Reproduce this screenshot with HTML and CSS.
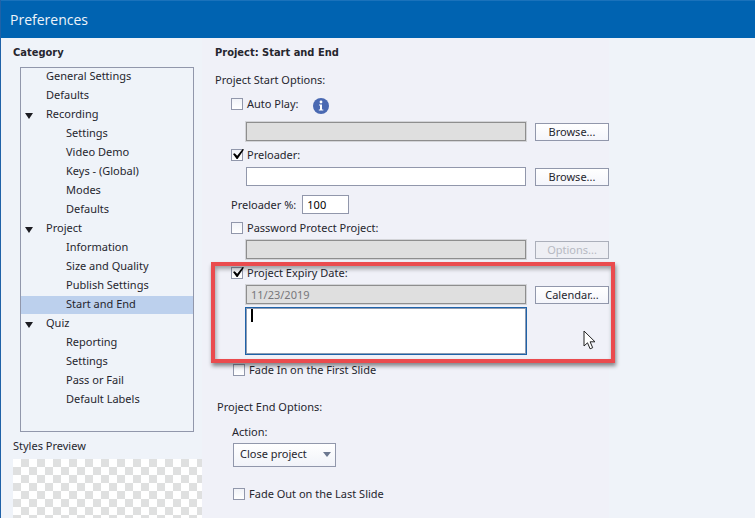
FILE: index.html
```html
<!DOCTYPE html>
<html lang="en">
<head>
    <meta charset="UTF-8">
    <title>Preferences</title>
    <link rel="stylesheet" href="styles.css">
</head>
<body>
    <header class="titlebar">Preferences</header>

    <div class="content">
        <aside class="sidebar">
            <h2 class="heading">Category</h2>
            <ul class="tree">
                <li><a href="#">General Settings</a></li>
                <li><a href="#">Defaults</a></li>
                <li>
                    <button class="toggle" aria-label="Collapse Recording"></button>
                    <a href="#">Recording</a>
                    <ul>
                        <li><a href="#">Settings</a></li>
                        <li><a href="#">Video Demo</a></li>
                        <li><a href="#">Keys - (Global)</a></li>
                        <li><a href="#">Modes</a></li>
                        <li><a href="#">Defaults</a></li>
                    </ul>
                </li>
                <li>
                    <button class="toggle" aria-label="Collapse Project"></button>
                    <a href="#">Project</a>
                    <ul>
                        <li><a href="#">Information</a></li>
                        <li><a href="#">Size and Quality</a></li>
                        <li><a href="#">Publish Settings</a></li>
                        <li><a href="#" class="selected">Start and End</a></li>
                    </ul>
                </li>
                <li>
                    <button class="toggle" aria-label="Collapse Quiz"></button>
                    <a href="#">Quiz</a>
                    <ul>
                        <li><a href="#">Reporting</a></li>
                        <li><a href="#">Settings</a></li>
                        <li><a href="#">Pass or Fail</a></li>
                        <li><a href="#">Default Labels</a></li>
                    </ul>
                </li>
            </ul>
            <div class="preview-label">Styles Preview</div>
            <div class="preview"></div>
        </aside>

        <main class="panel">
            <h2 class="heading">Project: Start and End</h2>
            <div class="section-label">Project Start Options:</div>

            <div class="option option-autoplay">
                <div class="check-row">
                    <input type="checkbox" id="autoPlay">
                    <label for="autoPlay">Auto Play:</label>
                    <svg class="info" viewBox="0 0 16 16">
                        <circle cx="8" cy="8" r="8" fill="#4a69b2"/>
                        <circle cx="8" cy="4" r="1.4" fill="#fff"/>
                        <path d="M6 6.5h3v5h1.3v1H5.8v-1H7v-4H6z" fill="#fff"/>
                    </svg>
                </div>
                <div class="field-row">
                    <input type="text" aria-label="Auto play image" disabled>
                    <button>Browse...</button>
                </div>
            </div>

            <div class="option">
                <div class="check-row">
                    <input type="checkbox" id="preloader" checked>
                    <label for="preloader">Preloader:</label>
                </div>
                <div class="field-row">
                    <input type="text" aria-label="Preloader file">
                    <button>Browse...</button>
                </div>
                <div class="percent-row">
                    <label for="percent">Preloader %:</label>
                    <input type="text" id="percent" value="100">
                </div>
            </div>

            <div class="option">
                <div class="check-row">
                    <input type="checkbox" id="password">
                    <label for="password">Password Protect Project:</label>
                </div>
                <div class="field-row">
                    <input type="text" aria-label="Password" disabled>
                    <button disabled>Options...</button>
                </div>
            </div>

            <div class="option expiry">
                <div class="check-row">
                    <input type="checkbox" id="expiry" checked>
                    <label for="expiry">Project Expiry Date:</label>
                </div>
                <div class="field-row">
                    <input type="text" aria-label="Expiry date" value="11/23/2019" disabled>
                    <button>Calendar...</button>
                </div>
                <div class="field-row message-row">
                    <textarea aria-label="Expiry message"></textarea>
                    <span class="caret"></span>
                </div>
                <div class="highlight"></div>
                <svg class="pointer" viewBox="0 0 13 20">
                    <path d="M1 1v15l3.5-3.2 2.6 6 2.6-1.1-2.6-5.9H12z" fill="#fff" stroke="#222" stroke-linejoin="round"/>
                </svg>
            </div>

            <div class="check-row shifted">
                <input type="checkbox" id="fadeIn">
                <label for="fadeIn">Fade In on the First Slide</label>
            </div>

            <div class="end-options">
                <div class="end-label">Project End Options:</div>
                <label class="action-label" for="action">Action:</label>
                <div class="select">
                    <select id="action">
                        <option>Close project</option>
                    </select>
                </div>
                <div class="check-row shifted">
                    <input type="checkbox" id="fadeOut">
                    <label for="fadeOut">Fade Out on the Last Slide</label>
                </div>
            </div>
        </main>
    </div>
</body>
</html>
```

FILE: styles.css
```css
* {
    box-sizing: border-box;
}

body {
    margin: 0;
    min-height: 100vh;
    display: flex;
    flex-direction: column;
    background: #eff3f9;
    border-left: 1px solid #1f62a8;
    color: #26262e;
    font-family: "Noto Sans", sans-serif;
    font-size: 11px;
    line-height: 18px;
}

input, button, select, textarea {
    font: inherit;
    color: inherit;
    margin: 0;
}

ul {
    list-style: none;
    margin: 0;
    padding: 0;
}

.titlebar {
    height: 38px;
    padding-left: 9px;
    background: #0063b1;
    border-top: 1px solid #1a72bb;
    color: #eef4fa;
    font-family: "Open Sans", sans-serif;
    font-size: 14px;
    line-height: 37px;
}

.content {
    flex: 1;
    display: flex;
}

.heading {
    margin: 0;
    height: 29px;
    font-family: "DejaVu Sans Condensed", "DejaVu Sans", sans-serif;
    font-size: 11px;
    font-weight: bold;
    line-height: 30px;
}

/* Category tree */
.sidebar {
    flex: none;
    width: 201px;
    padding-left: 12px;
    display: flex;
    flex-direction: column;
}

.tree {
    min-height: 365px;
    margin: 0 8px 0 7px;
    border: 1px solid #9197ab;
}

.tree li {
    position: relative;
}

.tree a {
    display: block;
    height: 18px;
    margin-bottom: 1px;
    padding-left: 25px;
    line-height: 16px;
    color: inherit;
    text-decoration: none;
}

.tree ul a {
    padding-left: 45px;
}

.tree a.selected {
    background: #bcd0ed;
}

.toggle {
    position: absolute;
    left: 4px;
    top: 7px;
    width: 8px;
    height: 6px;
    padding: 0;
    border: none;
    background: #1c1c22;
    clip-path: polygon(0 0, 100% 0, 50% 100%);
}

.preview-label {
    line-height: 18px;
    margin: 5px 0 4px;
}

.preview {
    flex: 1;
    background: repeating-conic-gradient(#dfe0e0 0 25%, #fff 0 50%) 0 0 / 16px 16px;
}

/* Settings panel */
.panel {
    flex: 1;
    max-width: 407px;
    padding-left: 13px;
    background: #f0f1f8;
}

.section-label {
    line-height: 26px;
    margin-bottom: 2px;
}

.option {
    position: relative;
    margin-bottom: 4px;
    padding-left: 16px;
}

.check-row {
    display: flex;
    align-items: center;
    height: 18px;
    gap: 4px;
}

.check-row.shifted {
    padding-left: 18px;
}

input[type="checkbox"] {
    appearance: none;
    width: 12px;
    height: 12px;
    border: 1px solid #9197ab;
    background: linear-gradient(#f1f3f8, #fff);
}

input[type="checkbox"]:checked {
    position: relative;
}

input[type="checkbox"]:checked::after {
    content: "";
    position: absolute;
    left: 1px;
    top: -1px;
    width: 11px;
    height: 10px;
    background: #000;
    clip-path: polygon(0 50%, 15% 42%, 38% 68%, 88% 0, 100% 6%, 42% 100%, 33% 100%);
}

.info {
    width: 16px;
    height: 16px;
    margin: 4px 0 0 10px;
}

.field-row {
    display: flex;
    gap: 9px;
    margin-top: 3px;
    padding-left: 15px;
}

.option-autoplay .field-row {
    margin-top: 9px;
}

input[type="text"] {
    flex: 1;
    min-width: 0;
    height: 19px;
    margin-bottom: 1px;
    padding: 0 4px;
    border: 1px solid #9197ab;
    background: #fff;
}

input[type="text"]:disabled {
    border-color: #8e8e8e;
    background: #dfdfdf;
    color: #77777b;
    box-shadow: 0 0 0 1px #d3d4d8;
}

.field-row button {
    width: 74px;
    height: 18px;
    margin-top: 1px;
    padding: 0;
    border: 1px solid #9197ab;
    background: linear-gradient(#fff, #f4f5fb);
    line-height: 14px;
}

.field-row button:disabled {
    border-color: #abafba;
    background: #eeeff4;
    color: #b6b9c2;
}

.percent-row {
    display: flex;
    align-items: center;
    gap: 6px;
    margin-top: 8px;
}

.percent-row input[type="text"] {
    flex: none;
    width: 47px;
    color: #000;
}

/* Expiry date */
.expiry {
    margin-bottom: 7px;
}

.message-row {
    position: relative;
    padding-right: 83px;
}

textarea {
    flex: 1;
    min-width: 0;
    height: 46px;
    padding: 0 5px;
    border: 1px solid #8d9bb3;
    background: #fff;
    box-shadow: 0 0 0 1px #1e62a8;
    outline: none;
    resize: none;
}

.caret {
    position: absolute;
    left: 20px;
    top: 1px;
    width: 2px;
    height: 13px;
    background: #000;
}

.highlight {
    position: absolute;
    left: -4px;
    right: -6px;
    top: -2px;
    bottom: -9px;
    border: 4px solid #ea4b4e;
    box-shadow: 1px 3px 4px rgba(0, 0, 0, 0.45), inset 1px 3px 4px rgba(0, 0, 0, 0.35);
    pointer-events: none;
}

.pointer {
    position: absolute;
    right: 13px;
    bottom: 4px;
    width: 13px;
    height: 20px;
}

/* Project end */
.end-options {
    margin-top: 19px;
}

.end-label {
    padding-left: 2px;
}

.action-label {
    display: block;
    margin: 7px 0 2px;
    padding-left: 17px;
}

.select {
    position: relative;
    width: 103px;
    margin: 0 0 18px 18px;
}

.select select {
    display: block;
    appearance: none;
    width: 100%;
    height: 24px;
    padding: 0 20px 2px 6px;
    border: 1px solid #9197ab;
    border-radius: 0;
    background: linear-gradient(#fff, #f1f3f9);
}

.select::after {
    content: "";
    position: absolute;
    right: 5px;
    top: 9px;
    width: 8px;
    height: 5px;
    background: #6c7890;
    clip-path: polygon(0 0, 100% 0, 50% 100%);
}
```
